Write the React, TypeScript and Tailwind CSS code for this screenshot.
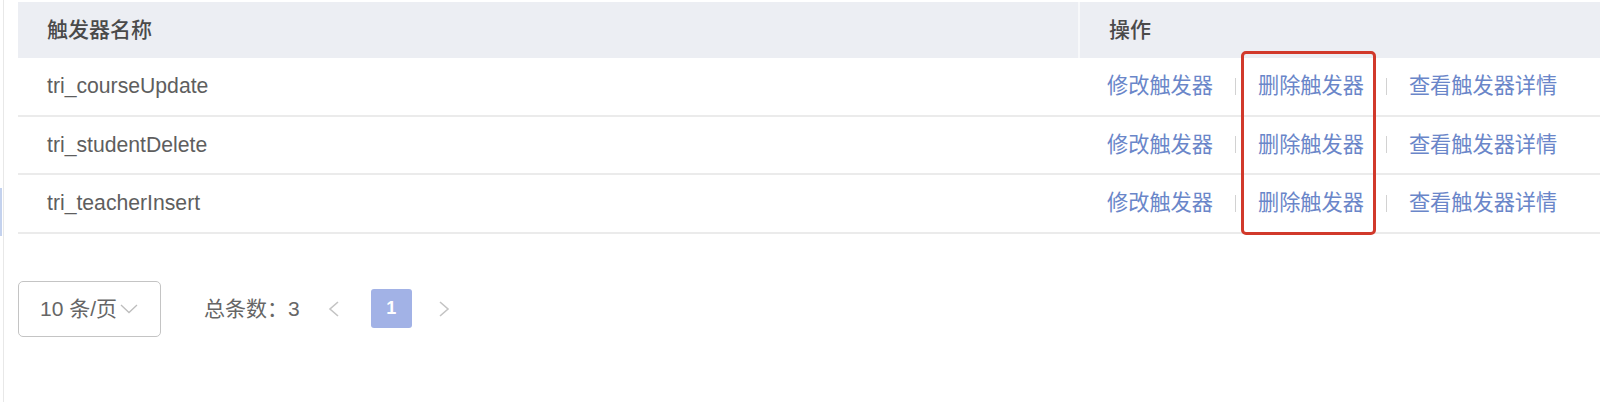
import React from "react";

const rows = ["tri_courseUpdate", "tri_studentDelete", "tri_teacherInsert"];

function Sep() {
  return <span className="mx-[22px] inline-block h-[17px] w-[1px] bg-[#d2d2d2]" />;
}

export default function App() {
  return (
    <div
      className="relative h-[402px] w-[1600px] overflow-hidden bg-white pl-[3px]"
      style={{ fontFamily: '"Liberation Sans", "Noto Sans CJK SC", sans-serif' }}
    >
      <div className="h-full border-l border-[#e8e8e8] pl-[14px] pt-[2px]">
        {/* table */}
        <div className="w-[1600px]">
          <div className="flex h-[56px] items-center bg-[#eceef3] text-[21px] font-medium text-[#4a4a4a]">
            <div className="flex h-full w-[1060px] items-center pl-[29px]">触发器名称</div>
            <div className="h-full w-[2px] bg-[#f7f8fa]" />
            <div className="flex h-full flex-1 items-center pl-[29px]">操作</div>
          </div>
          {rows.map((r) => (
            <div key={r} className="flex h-[58.5px] items-center border-b-2 border-[#ebebeb]">
              <div className="w-[1062px] pl-[29px] text-[21.2px] text-[#5e5e5e]">{r}</div>
              <div className="flex flex-1 items-center pl-[27px] text-[21.2px] text-[#6a86c9]">
                <span>修改触发器</span>
                <Sep />
                <span>删除触发器</span>
                <Sep />
                <span>查看触发器详情</span>
              </div>
            </div>
          ))}
        </div>

        {/* pagination */}
        <div className="mt-[47px] flex items-center">
          <div className="flex h-[56px] w-[143px] items-center rounded-[5px] border border-[#c4c4c4] pl-[21px] text-[21px] text-[#666]">
            <span>10 条/页</span>
            <svg width="18" height="10" viewBox="0 0 18 10" className="ml-[3px] mt-[1px]">
              <polyline points="1,1 9,8.5 17,1" fill="none" stroke="#bdbdbd" strokeWidth="1.3" />
            </svg>
          </div>
          <div className="ml-[43px] text-[21px] text-[#666]">总条数：3</div>
          <svg width="14" height="18" viewBox="0 0 14 18" className="ml-[27px]">
            <polyline points="11,2 3,9 11,16" fill="none" stroke="#c4c4c4" strokeWidth="1.6" />
          </svg>
          <div className="ml-[30px] flex h-[39px] w-[41px] items-center justify-center rounded-[3px] bg-[#a2b2e6] text-[18px] font-bold text-white">
            1
          </div>
          <svg width="14" height="18" viewBox="0 0 14 18" className="ml-[25px]">
            <polyline points="3,2 11,9 3,16" fill="none" stroke="#c4c4c4" strokeWidth="1.6" />
          </svg>
        </div>
      </div>

      {/* faint blue left accent */}
      <div className="absolute left-0 top-[188px] h-[48px] w-[2px] bg-[#c4d2ee]" />

      {/* red highlight box */}
      <div className="absolute left-[1241px] top-[51px] h-[184px] w-[135px] rounded-[5px] border-[3px] border-[#d1392b]" />
    </div>
  );
}
